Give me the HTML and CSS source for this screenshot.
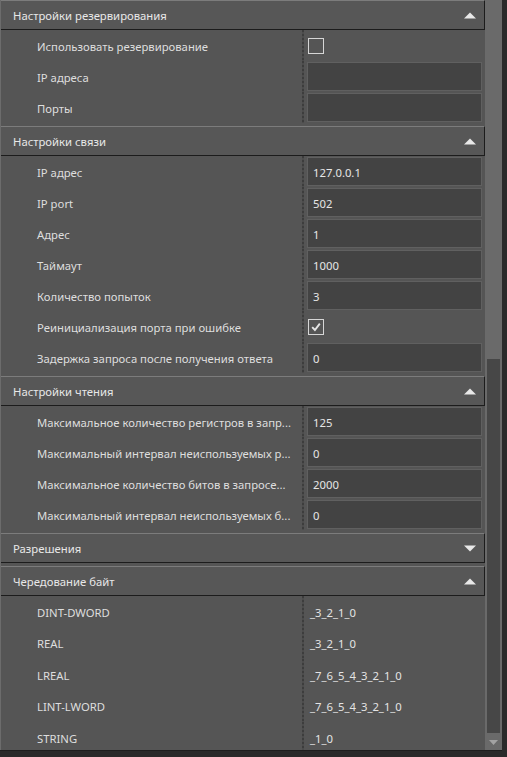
FILE: index.html
```html
<!DOCTYPE html>
<html lang="ru">
<head>
<meta charset="utf-8">
<title>Настройки</title>
<link rel="stylesheet" href="styles.css">
</head>
<body>
<div class="window">
  <div class="panel">
    <section class="section">
      <div class="header"><span>Настройки резервирования</span><svg class="arrow" width="12" height="7" viewBox="0 0 12 7"><polygon points="6,0.5 12,6.5 0,6.5" fill="#e8e8e8"/></svg></div>
      <div class="row"><div class="label">Использовать резервирование</div><div class="split"></div><div class="value"><span class="check"></span></div></div>
      <div class="row"><div class="label">IP адреса</div><div class="split"></div><div class="value"><div class="field"></div></div></div>
      <div class="row"><div class="label">Порты</div><div class="split"></div><div class="value"><div class="field"></div></div></div>
    </section>
    <section class="section">
      <div class="header"><span>Настройки связи</span><svg class="arrow" width="12" height="7" viewBox="0 0 12 7"><polygon points="6,0.5 12,6.5 0,6.5" fill="#e8e8e8"/></svg></div>
      <div class="row"><div class="label">IP адрес</div><div class="split"></div><div class="value"><div class="field">127.0.0.1</div></div></div>
      <div class="row"><div class="label">IP port</div><div class="split"></div><div class="value"><div class="field">502</div></div></div>
      <div class="row"><div class="label">Адрес</div><div class="split"></div><div class="value"><div class="field">1</div></div></div>
      <div class="row"><div class="label">Таймаут</div><div class="split"></div><div class="value"><div class="field">1000</div></div></div>
      <div class="row"><div class="label">Количество попыток</div><div class="split"></div><div class="value"><div class="field">3</div></div></div>
      <div class="row"><div class="label">Реинициализация порта при ошибке</div><div class="split"></div><div class="value"><span class="check"><svg width="14" height="14" viewBox="0 0 14 14"><path d="M3.2 7.2 L5.9 10 L10.8 3.6" fill="none" stroke="#e6e6e6" stroke-width="1.9"/></svg></span></div></div>
      <div class="row"><div class="label">Задержка запроса после получения ответа</div><div class="split"></div><div class="value"><div class="field">0</div></div></div>
    </section>
    <section class="section">
      <div class="header"><span>Настройки чтения</span><svg class="arrow" width="12" height="7" viewBox="0 0 12 7"><polygon points="6,0.5 12,6.5 0,6.5" fill="#e8e8e8"/></svg></div>
      <div class="row"><div class="label">Максимальное количество регистров в запр...</div><div class="split"></div><div class="value"><div class="field">125</div></div></div>
      <div class="row"><div class="label">Максимальный интервал неиспользуемых р...</div><div class="split"></div><div class="value"><div class="field">0</div></div></div>
      <div class="row"><div class="label">Максимальное количество битов в запросе...</div><div class="split"></div><div class="value"><div class="field">2000</div></div></div>
      <div class="row"><div class="label">Максимальный интервал неиспользуемых б...</div><div class="split"></div><div class="value"><div class="field">0</div></div></div>
    </section>
    <section class="section">
      <div class="header"><span>Разрешения</span><svg class="arrow" width="12" height="7" viewBox="0 0 12 7"><polygon points="0,0.5 12,0.5 6,6.5" fill="#e8e8e8"/></svg></div>
    </section>
    <section class="section">
      <div class="header"><span>Чередование байт</span><svg class="arrow" width="12" height="7" viewBox="0 0 12 7"><polygon points="6,0.5 12,6.5 0,6.5" fill="#e8e8e8"/></svg></div>
      <div class="row tall"><div class="label">DINT-DWORD</div><div class="split"></div><div class="value"><div class="plain">_3_2_1_0</div></div></div>
      <div class="row tall"><div class="label">REAL</div><div class="split"></div><div class="value"><div class="plain">_3_2_1_0</div></div></div>
      <div class="row tall"><div class="label">LREAL</div><div class="split"></div><div class="value"><div class="plain">_7_6_5_4_3_2_1_0</div></div></div>
      <div class="row tall"><div class="label">LINT-LWORD</div><div class="split"></div><div class="value"><div class="plain">_7_6_5_4_3_2_1_0</div></div></div>
      <div class="row tall"><div class="label">STRING</div><div class="split"></div><div class="value"><div class="plain">_1_0</div></div></div>
    </section>
  </div>
  <div class="scrollbar">
    <div class="scroll-space"></div>
    <div class="thumb"></div>
    <svg class="scroll-down" width="9" height="5" viewBox="0 0 9 5"><polygon points="0,0 9,0 4.5,5" fill="#a3a3a3"/></svg>
  </div>
</div>
</body>
</html>
```

FILE: styles.css
```css
* { box-sizing: border-box; }

body {
  margin: 0;
  background: #2a2a2a;
  font-family: "Noto Sans", "Open Sans", sans-serif;
  font-size: 11.3px;
  color: #e0e0e0;
}

.window {
  display: flex;
  width: 502px;
  height: 751px;
  border-bottom: 1px solid #1e1e1e;
  overflow: hidden;
}

.panel {
  width: 485px;
  flex: none;
  border-left: 1px solid #6c6c6c;
  background: #555555;
  overflow: hidden;
}

.section {
  margin-bottom: 3px;
}

.header {
  height: 30px;
  display: flex;
  align-items: center;
  justify-content: space-between;
  padding: 1px 8px 0 12px;
  background: #575757;
  border-top: 1px solid #7c7c7c;
  border-bottom: 1px solid #1c1c1c;
  border-right: 1px solid #1c1c1c;
  color: #e8e8e8;
}

.arrow { display: block; margin-top: -1px; }

.row {
  display: grid;
  grid-template-columns: 301px 3px 180px;
  height: 31px;
}

.row.tall { height: 31.5px; }

.label {
  padding-left: 36px;
  padding-top: 1px;
  display: flex;
  align-items: center;
  white-space: nowrap;
  color: #dedede;
}

.split {
  background-image: repeating-linear-gradient(to bottom, #3d3d3d 0 2px, #4c4c4c 2px 4px);
  background-size: 2px 100%;
  background-repeat: no-repeat;
  background-position: left top;
  position: relative;
  z-index: 1;
}

.value {
  display: flex;
  align-items: center;
  min-width: 0;
  background: #555555;
  position: relative;
  z-index: 1;
}

.field {
  width: 175px;
  height: 29px;
  margin-left: 2px;
  background: #434343;
  border: 1px solid #606060;
  padding: 1px 0 0 5px;
  display: flex;
  align-items: center;
  color: #e6e6e6;
}

.check {
  width: 16px;
  height: 16px;
  margin-left: 3px;
  border: 1px solid #d6d6d6;
  display: flex;
  align-items: center;
  justify-content: center;
}

.check svg { display: block; }

.plain {
  padding: 1px 0 0 5px;
  color: #e4e4e4;
}

.scrollbar {
  width: 17px;
  flex: none;
  background: #6a6a6a;
  display: flex;
  flex-direction: column;
  align-items: center;
}

.scroll-space { height: 359px; flex: none; }

.thumb {
  width: 13px;
  height: 374px;
  flex: none;
  background: #474747;
}

.scroll-down {
  display: block;
  margin-top: 7px;
}
```
